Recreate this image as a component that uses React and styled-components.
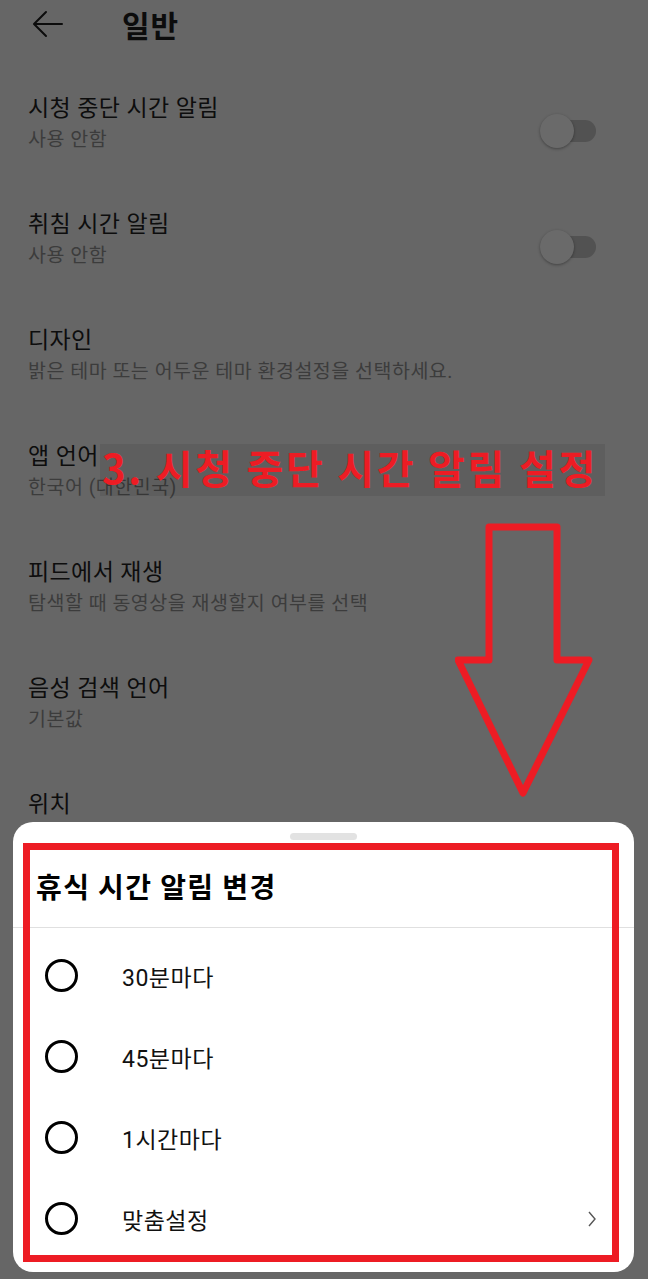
import React from "react";
import styled, { createGlobalStyle } from "styled-components";

const GlobalStyle = createGlobalStyle`
  html, body {
    margin: 0;
    padding: 0;
    background: #666666;
  }
  body {
    font-family: Roboto, "Noto Sans CJK KR", sans-serif;
  }
`;

const settings = [
  { title: "시청 중단 시간 알림", sub: "사용 안함", toggle: true },
  { title: "취침 시간 알림", sub: "사용 안함", toggle: true },
  { title: "디자인", sub: "밝은 테마 또는 어두운 테마 환경설정을 선택하세요." },
  { title: "앱 언어", sub: "한국어 (대한민국)" },
  { title: "피드에서 재생", sub: "탐색할 때 동영상을 재생할지 여부를 선택" },
  { title: "음성 검색 언어", sub: "기본값" },
  { title: "위치", sub: "" },
];

const options = ["30분마다", "45분마다", "1시간마다", "맞춤설정"];

const App = () => {
  return (
    <Page>
      <GlobalStyle />
      <Header>
        <BackButton>
          <svg width="32" height="28" viewBox="0 0 32 28" fill="none">
            <path
              d="M30 14H3M14 2L2 14L14 26"
              stroke="#0c0c0c"
              strokeWidth="2"
              strokeLinecap="round"
              strokeLinejoin="round"
            />
          </svg>
        </BackButton>
        <HeaderTitle>일반</HeaderTitle>
      </Header>

      <List>
        {settings.map((s) => (
          <Item key={s.title}>
            <ItemText>
              <ItemTitle>{s.title}</ItemTitle>
              {s.sub && <ItemSub>{s.sub}</ItemSub>}
            </ItemText>
            {s.toggle && (
              <Toggle>
                <Track />
                <Thumb />
              </Toggle>
            )}
          </Item>
        ))}
      </List>

      <Callout>3. 시청 중단 시간 알림 설정</Callout>

      <Arrow width="140" height="280" viewBox="455 522 140 280">
        <path
          d="M489 527H557V660H589L523 793L458 660H489Z"
          fill="none"
          stroke="#ed1c24"
          strokeWidth="7"
          strokeLinejoin="round"
        />
      </Arrow>

      <Sheet>
        <Handle />
        <SheetTitle>휴식 시간 알림 변경</SheetTitle>
        <Divider />
        <Options>
          {options.map((o, i) => (
            <Option key={o}>
              <Radio />
              <OptionLabel>{o}</OptionLabel>
              {i === options.length - 1 && (
                <Chevron width="8" height="16" viewBox="0 0 8 16">
                  <path
                    d="M1 1L7 8L1 15"
                    fill="none"
                    stroke="#555"
                    strokeWidth="1.4"
                  />
                </Chevron>
              )}
            </Option>
          ))}
        </Options>
        <Highlight />
      </Sheet>
    </Page>
  );
};

export default App;

const Page = styled.div`
  position: relative;
  width: 648px;
  height: 1279px;
  overflow: hidden;
  background: #666666;
`;

const Header = styled.div`
  display: flex;
  align-items: center;
  height: 48px;
`;

const BackButton = styled.div`
  width: 122px;
  padding-left: 32px;
  box-sizing: border-box;
  display: flex;
  align-items: center;
`;

const HeaderTitle = styled.div`
  font-size: 30px;
  font-weight: 700;
  letter-spacing: 1px;
  color: #0c0c0c;
`;

const List = styled.div`
  padding-top: 20px;
`;

const Item = styled.div`
  display: flex;
  align-items: center;
  justify-content: space-between;
  height: 116px;
  padding: 0 52px 0 28px;
  box-sizing: border-box;
`;

const ItemText = styled.div`
  display: flex;
  flex-direction: column;
  align-self: flex-start;
  padding-top: 26px;
`;

const ItemTitle = styled.div`
  font-size: 23px;
  line-height: 30px;
  letter-spacing: 0.4px;
  color: #0d0d0d;
`;

const ItemSub = styled.div`
  font-size: 19.5px;
  line-height: 32px;
  letter-spacing: 0.5px;
  color: #3c3c3c;
`;

const Toggle = styled.div`
  position: relative;
  width: 56px;
  height: 34px;
  margin-top: 10px;
`;

const Track = styled.div`
  position: absolute;
  left: 15px;
  top: 6px;
  width: 41px;
  height: 22px;
  border-radius: 11px;
  background: #525252;
`;

const Thumb = styled.div`
  position: absolute;
  left: 0;
  top: 0;
  width: 34px;
  height: 34px;
  border-radius: 50%;
  background: #6a6a6a;
  box-shadow: 0 1px 3px rgba(0, 0, 0, 0.35);
`;

const Callout = styled.div`
  position: absolute;
  left: 100px;
  top: 444px;
  width: 505px;
  height: 52px;
  padding-left: 2px;
  box-sizing: border-box;
  background: rgba(0, 0, 0, 0.07);
  color: #ed1c24;
  font-family: "Noto Sans CJK KR", sans-serif;
  font-size: 40px;
  font-weight: 700;
  line-height: 46px;
  white-space: nowrap;
  letter-spacing: 2.7px;
`;

const Arrow = styled.svg`
  position: absolute;
  left: 455px;
  top: 522px;
`;

const Sheet = styled.div`
  position: absolute;
  left: 13px;
  top: 822px;
  width: 621px;
  height: 450px;
  background: #ffffff;
  border-radius: 20px;
  display: flex;
  flex-direction: column;
  padding-top: 11px;
  box-sizing: border-box;
`;

const Handle = styled.div`
  align-self: center;
  width: 67px;
  height: 7px;
  border-radius: 4px;
  background: #e2e2e2;
`;

const SheetTitle = styled.div`
  height: 82px;
  margin-top: 5px;
  padding-left: 23px;
  display: flex;
  align-items: center;
  font-family: "Noto Sans CJK KR", sans-serif;
  font-size: 28px;
  font-weight: 700;
  letter-spacing: 1.4px;
  color: #000;
`;

const Divider = styled.div`
  height: 1px;
  background: #e0e0e0;
`;

const Options = styled.div`
  padding-top: 7px;
  display: flex;
  flex-direction: column;
`;

const Option = styled.div`
  display: flex;
  align-items: center;
  height: 81px;
  padding: 0 38px 0 32px;
`;

const Radio = styled.div`
  width: 33px;
  height: 33px;
  border: 3px solid #000;
  border-radius: 50%;
  box-sizing: border-box;
  flex-shrink: 0;
`;

const OptionLabel = styled.div`
  margin-left: 44px;
  flex: 1;
  font-size: 23px;
  letter-spacing: 0.5px;
  color: #111;
`;

const Chevron = styled.svg`
  flex-shrink: 0;
`;

const Highlight = styled.div`
  position: absolute;
  left: 10px;
  top: 21px;
  width: 596px;
  height: 419px;
  border: 7px solid #ed1c24;
  box-sizing: border-box;
  pointer-events: none;
`;
